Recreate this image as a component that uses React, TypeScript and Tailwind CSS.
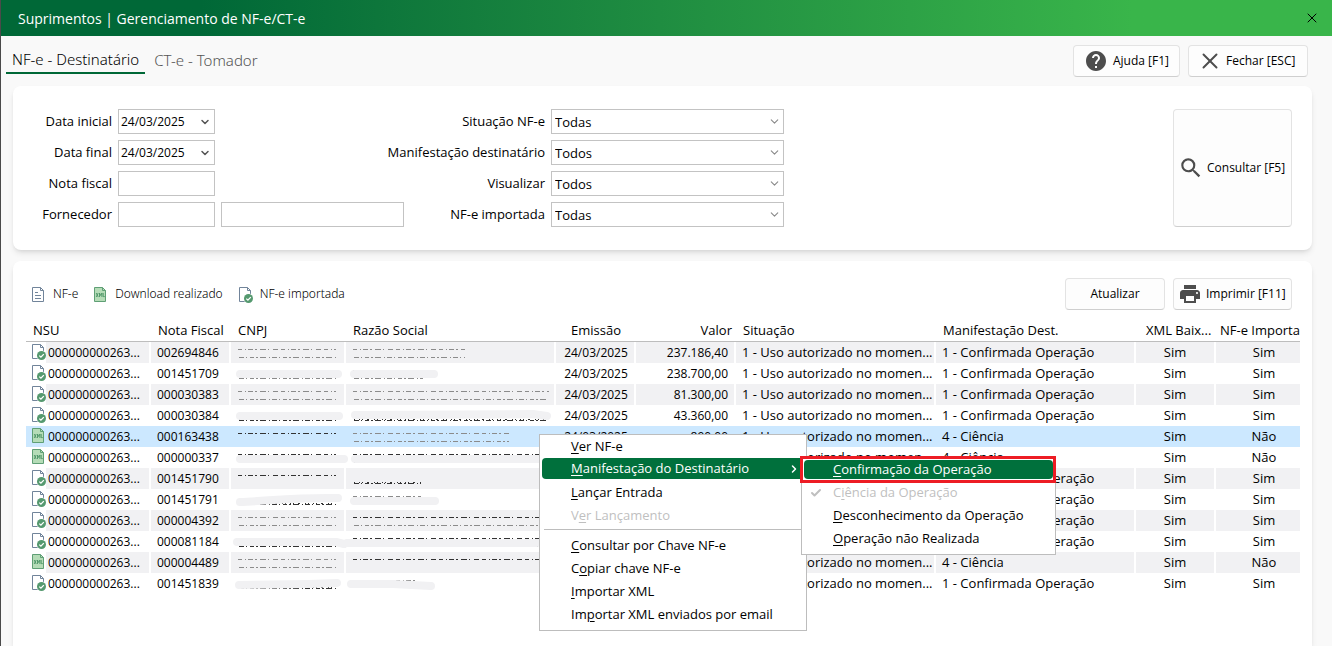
import { Check, ChevronDown, ChevronRight, X } from 'lucide-react';
import { MdHelp, MdPrint, MdSearch } from 'react-icons/md';

type Icone = 'nfe' | 'xml' | 'importada';

// Tarja que cobre os dados sigilosos: largura do conteúdo, tons das bordas e faixa
interface Tarja {
    w: number;
    top: string;
    bottom: string;
    faixa?: string;
}

interface Nota {
    nf: string;
    icone: Icone;
    cnpj: Tarja;
    razao: Tarja;
    valor: string;
    ciencia?: boolean;
    importada: string;
}

const CLARO = '#8b8b8b';
const ESCURO = '#333333';

const notas: Nota[] = [
    { nf: '002694846', icone: 'importada', valor: '237.186,40', importada: 'Sim', cnpj: { w: 98, top: CLARO, bottom: CLARO }, razao: { w: 112, top: CLARO, bottom: CLARO } },
    { nf: '001451709', icone: 'importada', valor: '238.700,00', importada: 'Sim', cnpj: { w: 98, top: 'none', bottom: CLARO, faixa: 'M2 11H100' }, razao: { w: 70, top: CLARO, bottom: CLARO, faixa: 'M1 11H81' } },
    { nf: '000030383', icone: 'importada', valor: '81.300,00', importada: 'Sim', cnpj: { w: 98, top: CLARO, bottom: CLARO }, razao: { w: 196, top: CLARO, bottom: CLARO } },
    { nf: '000030384', icone: 'importada', valor: '43.360,00', importada: 'Sim', cnpj: { w: 98, top: 'none', bottom: ESCURO, faixa: 'M2 11H101' }, razao: { w: 196, top: 'none', bottom: ESCURO, faixa: 'M2 10L180 9L194 11' } },
    { nf: '000163438', icone: 'xml', valor: '890,00', ciencia: true, importada: 'Não', cnpj: { w: 98, top: ESCURO, bottom: 'none' }, razao: { w: 156, top: CLARO, bottom: CLARO } },
    { nf: '000000337', icone: 'xml', valor: '390,00', ciencia: true, importada: 'Não', cnpj: { w: 98, top: ESCURO, bottom: 'none', faixa: 'M2 12H106' }, razao: { w: 188, top: ESCURO, bottom: CLARO, faixa: 'M2 12H185' } },
    { nf: '001451790', icone: 'importada', valor: '12.450,00', importada: 'Sim', cnpj: { w: 98, top: ESCURO, bottom: 'none' }, razao: { w: 68, top: 'none', bottom: ESCURO } },
    { nf: '001451791', icone: 'importada', valor: '12.450,00', importada: 'Sim', cnpj: { w: 98, top: 'none', bottom: ESCURO, faixa: 'M2 13C30 12 60 8 100 9' }, razao: { w: 68, top: CLARO, bottom: CLARO, faixa: 'M1 12H82' } },
    { nf: '000004392', icone: 'importada', valor: '3.120,00', importada: 'Sim', cnpj: { w: 98, top: CLARO, bottom: CLARO }, razao: { w: 188, top: ESCURO, bottom: CLARO } },
    { nf: '000081184', icone: 'importada', valor: '7.840,00', importada: 'Sim', cnpj: { w: 98, top: 'none', bottom: ESCURO, faixa: 'M-1 11H98L106 13' }, razao: { w: 188, top: ESCURO, bottom: ESCURO, faixa: 'M-6 12H184' } },
    { nf: '000004489', icone: 'xml', valor: '1.960,00', ciencia: true, importada: 'Não', cnpj: { w: 98, top: CLARO, bottom: CLARO }, razao: { w: 188, top: ESCURO, bottom: 'none' } },
    { nf: '001451839', icone: 'importada', valor: '12.450,00', importada: 'Sim', cnpj: { w: 98, top: 'none', bottom: ESCURO, faixa: 'M1 12L70 11L99 10' }, razao: { w: 62, top: CLARO, bottom: 'none', faixa: 'M-2 11H40L78 13' } },
];

const colunas = [
    { titulo: 'NSU', largura: 'w-[125px]', classe: 'pl-[7px] text-left' },
    { titulo: 'Nota Fiscal', largura: 'w-[80px]', classe: 'pl-[7px] text-left' },
    { titulo: 'CNPJ', largura: 'w-[115px]', classe: 'pl-[7px] text-left' },
    { titulo: 'Razão Social', largura: '', classe: 'pl-[7px] text-left' },
    { titulo: 'Emissão', largura: 'w-[80px]', classe: 'text-center' },
    { titulo: 'Valor', largura: 'w-[100px]', classe: 'pr-1 text-right' },
    { titulo: 'Situação', largura: 'w-[200px]', classe: 'pl-[7px] text-left' },
    { titulo: 'Manifestação Dest.', largura: 'w-[200px]', classe: 'pl-[7px] text-left' },
    { titulo: 'XML Baix...', largura: 'w-[80px]', classe: 'pl-[10px] text-left' },
    { titulo: 'NF-e Importa', largura: 'w-[84px]', classe: 'pl-1 text-left' },
];

const filtros = [
    { id: 'situacao', label: 'Situação NF-e', valor: 'Todas' },
    { id: 'manifestacao', label: 'Manifestação destinatário', valor: 'Todos' },
    { id: 'visualizar', label: 'Visualizar', valor: 'Todos' },
    { id: 'importada', label: 'NF-e importada', valor: 'Todas' },
];

const campo = 'block h-[25px] w-full border border-[#c3c3c3] bg-white outline-none';
const botao = 'flex items-center whitespace-nowrap rounded border border-[#e3e3e3] border-b-[#cfcfcf] bg-[#fdfdfd] text-[12px]';

function DocIcon({ tipo }: { tipo: Icone }) {
    const xml = tipo === 'xml';
    const cor = xml ? '#5f9f75' : '#71849a';
    return (
        <svg width="15" height="19" viewBox="0 0 15 19" fill="none" className="block shrink-0">
            <path d="M.5 2.5H8.5L11.5 5.5V16.5H.5Z" fill={xml ? '#b5dcb7' : '#fff'} stroke={cor} />
            <path d="M8.5 2.5V5.5H11.5" stroke={cor} />
            {tipo === 'nfe' && <path d="M3 7.5H6M3 10.5H9M3 13.5H9" stroke={cor} />}
            {xml && <path d="M2.2 8L4.2 12M4.2 8L2.2 12M5.5 12V8L6.7 10.5L7.9 8V12M9.2 8V11.6H10.8" stroke="#4c9466" strokeWidth=".9" />}
            {tipo === 'importada' && (
                <>
                    <circle cx="9.5" cy="13.5" r="5" fill="#fff" />
                    <circle cx="9.5" cy="13.5" r="4.5" fill="#55996f" />
                    <path d="M7.3 13.6L8.9 15.1L11.8 12.1" stroke="#fff" strokeWidth="1.3" />
                </>
            )}
        </svg>
    );
}

function DadoOculto({ w, top, bottom, faixa }: Tarja) {
    return (
        <svg width={w} height="21" className="block overflow-visible" fill="none">
            <path d={`M0 7.5H${w}`} stroke={top} strokeDasharray="4 3 1 2 5 2 2 3 6 2 1 4 5 3" />
            <path d={`M1 15.5H${w}`} stroke={bottom} strokeDasharray="5 2 1 3 4 2 2 2 6 3 1 2" />
            {bottom === ESCURO && <path d={`M1 14.5H${w}`} stroke={bottom} strokeDasharray="1 4 1 2 1 4 2 5 1 2" />}
            {faixa && <path d={faixa} stroke="#f1f1f3" strokeWidth="8" strokeLinecap="round" strokeLinejoin="round" />}
        </svg>
    );
}

// Sublinha a tecla de atalho do item
function Atalho({ texto, pos = 0 }: { texto: string; pos?: number }) {
    return (
        <span>
            {texto.slice(0, pos)}
            <u className="underline-offset-2">{texto[pos]}</u>
            {texto.slice(pos + 1)}
        </span>
    );
}

function MenuContexto() {
    const item = 'flex h-[23px] w-full items-center pl-[29px] text-left whitespace-nowrap';
    const subitem = 'flex h-[23px] w-full items-center pl-[31px] whitespace-nowrap';
    return (
        <div role="menu" className="absolute top-[173px] left-[526px] w-[268px] border border-[#bdbdbd] bg-white px-[2px] pb-1">
            <button role="menuitem" className={item}><Atalho texto="Ver NF-e" /></button>
            <div className="relative">
                <button role="menuitem" className="mb-[2px] flex h-[21px] w-full items-center justify-between rounded-sm bg-[#00703c] pl-[29px] text-left text-white">
                    <Atalho texto="Manifestação do Destinatário" />
                    <ChevronRight size={12} strokeWidth={3} className="mr-1" />
                </button>
                <div role="menu" className="absolute -top-[1px] -right-[252px] w-[255px] border border-[#bdbdbd] bg-white pb-1">
                    <div className="absolute -top-[2px] -right-[1px] -left-[2px] z-10 h-[27px] border-[3px] border-[#ed1c24]" />
                    <div className="px-[2px] pt-[2px] pb-[2px]">
                        <button role="menuitem" className="flex h-[19px] w-full items-center rounded bg-[#00703c] pl-[29px] text-white">
                            <Atalho texto="Confirmação da Operação" />
                        </button>
                    </div>
                    <button role="menuitem" disabled className="flex h-[23px] w-full items-center gap-[11px] pl-2 text-[#bfbfbf]">
                        <Check size={12} strokeWidth={4} />
                        <Atalho texto="Ciência da Operação" pos={1} />
                    </button>
                    <button role="menuitem" className={subitem}><Atalho texto="Desconhecimento da Operação" /></button>
                    <button role="menuitem" className={subitem}><Atalho texto="Operação não Realizada" /></button>
                </div>
            </div>
            <button role="menuitem" className={item}><Atalho texto="Lançar Entrada" /></button>
            <button role="menuitem" disabled className={`${item} text-[#bfbfbf]`}><Atalho texto="Ver Lançamento" pos={1} /></button>
            <hr className="mx-[2px] mt-[2px] mb-1 border-[#bdbdbd]" />
            <button role="menuitem" className={item}><Atalho texto="Consultar por Chave NF-e" /></button>
            <button role="menuitem" className={item}><Atalho texto="Copiar chave NF-e" pos={1} /></button>
            <button role="menuitem" className={item}><Atalho texto="Importar XML" /></button>
            <button role="menuitem" className={item}><Atalho texto="Importar XML enviados por email" pos={2} /></button>
        </div>
    );
}

export default function App() {
    return (
        <div className="flex min-h-screen flex-col overflow-hidden border-l border-[#4a4a4a] bg-[#f9f9f9] font-['Open_Sans','Noto_Sans',sans-serif] text-[13px] text-black">
            {/* Barra de título */}
            <header className="flex h-9 items-center justify-between bg-linear-to-r from-[#006837] from-15% to-[#39b54a] to-85% pr-3 pl-[17px]">
                <h1 className="text-[14px] text-white">Suprimentos | Gerenciamento de NF-e/CT-e</h1>
                <button aria-label="Fechar janela"><X size={16} strokeWidth={1.5} /></button>
            </header>

            {/* Abas e ações */}
            <div className="flex h-[50px] items-start justify-between pr-6 pl-[5px]">
                <nav className="flex pt-[9px] font-['Noto_Sans',sans-serif] text-[15px] font-light">
                    <a href="#nfe" className="h-[29px] border-b-2 border-[#006837] px-[6px] leading-[28px]">NF-e - Destinatário</a>
                    <a href="#cte" className="ml-[3px] px-[6px] leading-[30px] text-[#555]">CT-e - Tomador</a>
                </nav>
                <div className="flex gap-2 pt-[9px]">
                    <button className={`${botao} h-8 w-[107px] gap-[5px] pl-[10px]`}><MdHelp size={24} color="#4d4d4d" className="shrink-0" />Ajuda [F1]</button>
                    <button className={`${botao} h-8 w-[120px] gap-[3px] pl-2`}><X size={26} strokeWidth={1.8} color="#4d4d4d" className="shrink-0" />Fechar [ESC]</button>
                </div>
            </div>

            {/* Filtros */}
            <section className="mr-5 ml-3 flex justify-between rounded-lg bg-white px-5 py-[23px] shadow-md">
                <form className="grid grid-cols-[79px_97px_183px_135px_233px] gap-[6px] text-right leading-[25px]">
                    {['Data inicial', 'Data final', 'Nota fiscal', 'Fornecedor'].map((label, i) => (
                        <div key={label} className="contents">
                            <label htmlFor={`campo-${i}`}>{label}</label>
                            <div className="relative">
                                <input id={`campo-${i}`} defaultValue={i < 2 ? '24/03/2025' : ''} className={`${campo} px-[2px] text-[12px]`} />
                                {i < 2 && <ChevronDown size={12} strokeWidth={3} color="#555" className="absolute top-[7px] right-1" />}
                            </div>
                            {i === 3 && <input aria-label="Nome do fornecedor" className={campo} />}
                            <label htmlFor={filtros[i].id} className={i === 3 ? 'whitespace-nowrap' : 'col-span-2'}>{filtros[i].label}</label>
                            <div className="relative">
                                <select id={filtros[i].id} className={`${campo} appearance-none px-[3px]`}>
                                    <option>{filtros[i].valor}</option>
                                </select>
                                <ChevronDown size={13} strokeWidth={2} color="#8a8a8a" className="pointer-events-none absolute top-[6px] right-[3px]" />
                            </div>
                        </div>
                    ))}
                </form>
                <button className={`${botao} w-[119px] gap-[3px] pl-1`}><MdSearch size={26} color="#4d4d4d" className="shrink-0" />Consultar [F5]</button>
            </section>

            {/* Listagem */}
            <section className="relative mt-[11px] mr-5 ml-3 flex-1 rounded-t-lg bg-white pt-[17px] shadow-md">
                <div className="flex items-center justify-between pr-5 pl-[19px]">
                    <div className="flex items-center font-['Noto_Sans',sans-serif] text-[12px] font-light">
                        <DocIcon tipo="nfe" /><span className="mr-4 ml-[6px]">NF-e</span>
                        <DocIcon tipo="xml" /><span className="mr-4 ml-[6px]">Download realizado</span>
                        <DocIcon tipo="importada" /><span className="ml-[6px]">NF-e importada</span>
                    </div>
                    <div className="flex gap-2">
                        <button className={`${botao} h-8 w-[100px] justify-center`}>Atualizar</button>
                        <button className={`${botao} h-8 w-[119px] gap-1 pl-1`}><MdPrint size={24} color="#4d4d4d" className="shrink-0" />Imprimir [F11]</button>
                    </div>
                </div>

                <div className="mt-[9px] mr-3 ml-[13px]">
                    <table className="w-full table-fixed border-collapse whitespace-nowrap">
                        <colgroup>
                            {colunas.map((c) => <col key={c.titulo} className={c.largura} />)}
                        </colgroup>
                        <thead>
                            <tr className="h-[22px] border-b border-[#bdbdbd]">
                                {colunas.map((c) => (
                                    <th key={c.titulo} className={`p-0 leading-[22px] font-normal ${c.classe}`}>{c.titulo}</th>
                                ))}
                            </tr>
                        </thead>
                        <tbody>
                            {notas.map((n, i) => {
                                const ativa = i === 4;
                                const fundo = ativa ? 'bg-[#cce8ff]' : i % 2 === 0 ? 'bg-[#f1f1f3]' : 'bg-white';
                                const cel = `h-[21px] leading-[21px] ${fundo} ${ativa ? '' : 'shadow-[inset_-2px_0_0_#fff]'}`;
                                return (
                                    <tr key={i}>
                                        <td className="h-[21px] p-0">
                                            <div className={`flex h-[21px] ${ativa ? 'bg-[#cce8ff]' : ''}`}>
                                                <div className="w-5 shrink-0 pl-[6px]"><DocIcon tipo={n.icone} /></div>
                                                <div className={`grow pl-[2px] text-[12px] ${cel}`}>000000000263...</div>
                                            </div>
                                        </td>
                                        <td className={`p-0 pl-[6px] text-[12px] ${cel}`}>{n.nf}</td>
                                        <td className={`p-0 pl-[7px] ${cel}`}><DadoOculto {...n.cnpj} /></td>
                                        <td className={`p-0 pl-[7px] ${cel}`}><DadoOculto {...n.razao} /></td>
                                        <td className={`p-0 text-center text-[12px] ${cel}`}>24/03/2025</td>
                                        <td className={`p-0 pr-2 text-right text-[12px] ${cel}`}>{n.valor}</td>
                                        <td className={`p-0 pl-[6px] ${cel}`}>1 - Uso autorizado no momen...</td>
                                        <td className={`p-0 pl-[6px] ${cel}`}>{n.ciencia ? '4 - Ciência' : '1 - Confirmada Operação'}</td>
                                        <td className={`p-0 pr-[2px] text-center ${cel}`}>Sim</td>
                                        <td className={`h-[21px] p-0 pl-3 text-center leading-[21px] ${fundo}`}>{n.importada}</td>
                                    </tr>
                                );
                            })}
                        </tbody>
                    </table>
                </div>

                <MenuContexto />
            </section>
        </div>
    );
}
